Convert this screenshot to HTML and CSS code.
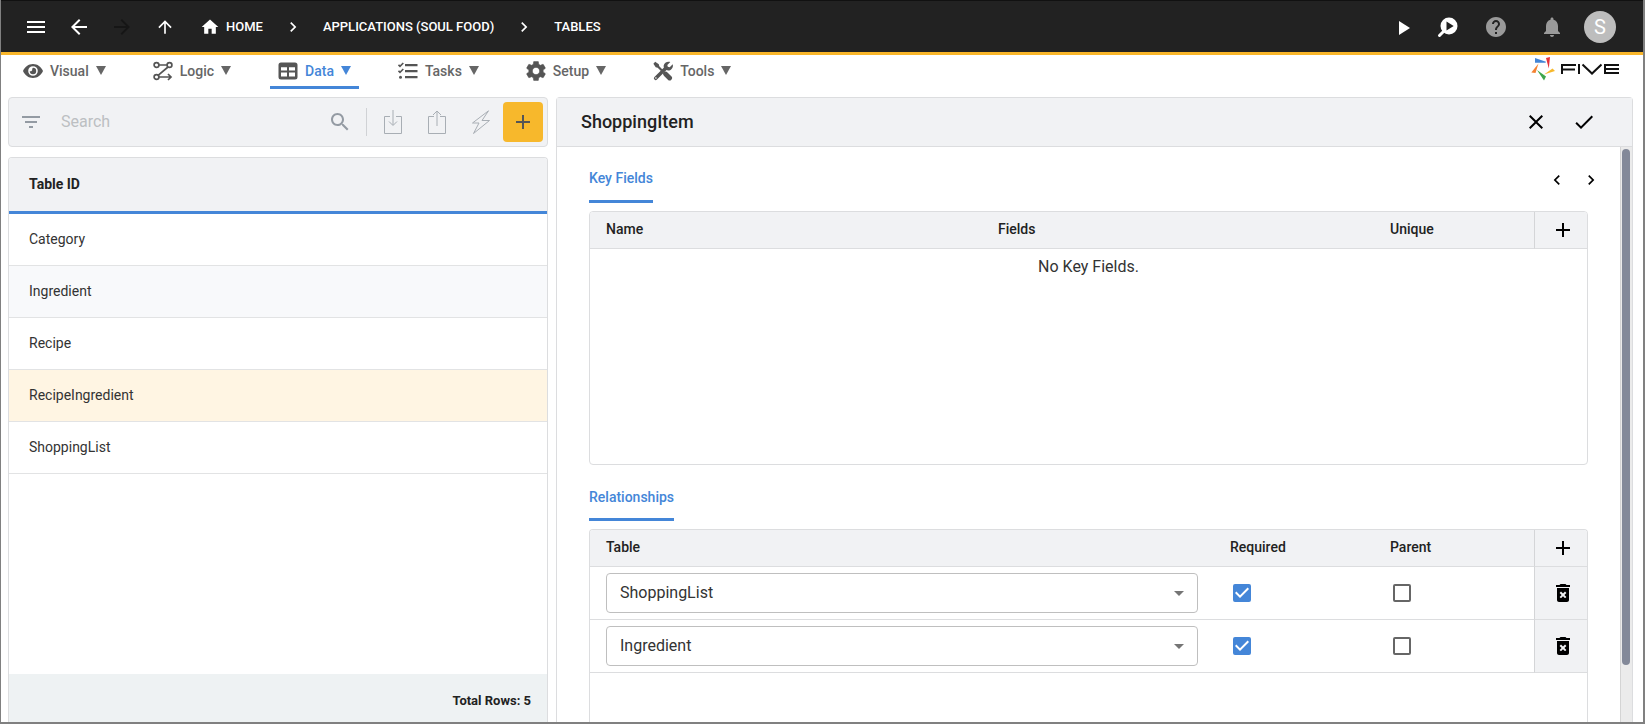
FILE: index.html
```html
<!DOCTYPE html>
<html lang="en">
<head>
<meta charset="utf-8">
<title>Five - Tables</title>
<link rel="stylesheet" href="styles.css">
</head>
<body>
<div class="app">
  <header class="topbar">
    <div class="topbar-nav">
      <button class="icon-btn" aria-label="Menu"><svg class="ico" viewBox="0 0 24 24"><path d="M3 18h18v-2H3v2zm0-5h18v-2H3v2zm0-7v2h18V6H3z"/></svg></button>
      <button class="icon-btn" aria-label="Back"><svg class="ico" viewBox="0 0 24 24"><path d="M20 11H7.830l5.590-5.590L12 4l-8 8 8 8 1.410-1.410L7.830 13H20v-2z"/></svg></button>
      <button class="icon-btn dim" aria-label="Forward" disabled><svg class="ico" viewBox="0 0 24 24"><path d="M12 4l-1.410 1.410L16.170 11H4v2h12.170l-5.580 5.590L12 20l8-8z"/></svg></button>
      <button class="icon-btn" aria-label="Up"><svg class="ico small" viewBox="0 0 24 24"><path d="M4 12l1.410 1.410L11 7.830V20h2V7.830l5.580 5.590L20 12l-8-8-8 8z"/></svg></button>
    </div>
    <nav class="crumbs">
      <a href="#" class="crumb"><svg class="home" viewBox="0 0 24 24"><path d="M10 20v-6h4v6h5v-8h3L12 3 2 12h3v8z"/></svg>HOME</a>
      <svg class="chev" viewBox="0 0 24 24"><path d="M8.600 16.600L13.200 12 8.600 7.400 10 6l6 6-6 6z"/></svg>
      <a href="#" class="crumb">APPLICATIONS (SOUL FOOD)</a>
      <svg class="chev" viewBox="0 0 24 24"><path d="M8.600 16.600L13.200 12 8.600 7.400 10 6l6 6-6 6z"/></svg>
      <a href="#" class="crumb">TABLES</a>
    </nav>
    <div class="topbar-tools">
      <button class="icon-btn" aria-label="Run"><svg class="ico" viewBox="0 0 24 24"><path d="M7 6v14l11-7z"/></svg></button>
      <button class="icon-btn" aria-label="Inspect"><svg class="ico" viewBox="0 0 24 24"><circle cx="13" cy="11" r="8.500"/><path d="M8 16l-4.500 4.500" stroke="#fff" stroke-width="3" stroke-linecap="round"/><path fill="#222" d="M10.500 6.500v9l7.200-4.500z"/></svg></button>
      <button class="icon-btn grey help" aria-label="Help"><svg class="ico" viewBox="0 0 24 24"><path d="M12 2C6.480 2 2 6.480 2 12s4.480 10 10 10 10-4.480 10-10S17.520 2 12 2zm1 17h-2v-2h2v2zm2.070-7.750l-.9.920C13.450 12.900 13 13.500 13 15h-2v-.5c0-1.100.45-2.100 1.170-2.830l1.240-1.260c.37-.36.590-.86.590-1.410 0-1.100-.9-2-2-2s-2 .9-2 2H8c0-2.210 1.790-4 4-4s4 1.790 4 4c0 .88-.36 1.680-.93 2.250z"/></svg></button>
      <button class="icon-btn grey bell" aria-label="Notifications"><svg class="ico" viewBox="0 0 24 24"><path d="M12 22c1.100 0 2-.9 2-2h-4c0 1.100.9 2 2 2zm6-6v-5c0-3.070-1.630-5.640-4.500-6.320V4c0-.83-.67-1.500-1.500-1.500s-1.500.67-1.500 1.500v.68C7.640 5.360 6 7.920 6 11v5l-2 2v1h16v-1l-2-2z"/></svg></button>
      <button class="avatar">S</button>
    </div>
  </header>

  <div class="menubar">
    <nav class="menu">
      <button class="menu-item"><svg class="mi" viewBox="0 0 20 20"><path fill-rule="evenodd" d="M10 3C5.500 3 1.800 5.800 0 10c1.800 4.200 5.500 7 10 7s8.200-2.800 10-7c-1.800-4.200-5.500-7-10-7zm0 2.200a4.800 4.800 0 1 1 0 9.600 4.800 4.800 0 0 1 0-9.600z"/><path d="M10 6.800A3.200 3.200 0 1 1 6.800 10c.8.600 2.400.2 2.400-1.200 0-.8 0-1.500.8-2z"/></svg>Visual<i class="tri"></i></button>
      <button class="menu-item"><svg class="mi" viewBox="0 0 20 20"><g fill="none" stroke="#555" stroke-width="1.700"><circle cx="3.500" cy="4" r="2.400"/><circle cx="16.500" cy="4" r="2.400"/><circle cx="3.500" cy="16" r="2.400"/><path d="M6 4h8M15 6L5.400 14.200M6 16h11.500M15 13l3 3-3 3"/></g></svg>Logic<i class="tri"></i></button>
      <button class="menu-item active"><svg class="mi" viewBox="0 0 20 20"><path fill-rule="evenodd" d="M3 1.500h14a2.500 2.500 0 0 1 2.500 2.500v12a2.500 2.500 0 0 1-2.500 2.500H3A2.500 2.500 0 0 1 .5 16V4A2.500 2.500 0 0 1 3 1.500zM3 6.300v3.200h6V6.300zm8 0v3.200h6V6.300zm-8 5.200v4h6v-4zm8 0v4h6v-4z"/></svg>Data<i class="tri"></i></button>
      <button class="menu-item"><svg class="mi" viewBox="0 0 20 20"><path d="M7 3h12.500v2.200H7zM7 9h12.500v2.200H7zM7 15h12.500v2.200H7z"/><circle cx="2.500" cy="16.200" r="1.500"/><path fill="none" stroke="#555" stroke-width="1.600" d="M.5 3.800l1.500 1.600L5.300 2M.5 9.800L2 11.400 5.300 8"/></svg>Tasks<i class="tri"></i></button>
      <button class="menu-item"><svg class="mi" viewBox="2 2 20 20"><path d="M19.140 12.940c.04-.3.060-.61.060-.94 0-.32-.02-.64-.07-.94l2.030-1.580c.18-.14.230-.41.120-.61l-1.920-3.320c-.12-.22-.37-.29-.59-.22l-2.390.96c-.5-.38-1.030-.7-1.620-.94l-.36-2.540c-.04-.24-.24-.41-.48-.41h-3.840c-.24 0-.43.17-.47.410l-.36 2.540c-.59.24-1.130.57-1.620.94l-2.390-.96c-.22-.08-.47 0-.59.220L2.740 8.870c-.12.210-.08.470.12.610l2.030 1.580c-.05.300-.09.630-.09.940s.02.640.07.940l-2.030 1.580c-.18.140-.23.410-.12.610l1.920 3.320c.12.220.37.290.59.220l2.390-.96c.5.380 1.030.7 1.620.94l.36 2.540c.05.240.24.410.48.410h3.840c.24 0 .44-.17.470-.41l.36-2.540c.59-.24 1.130-.56 1.620-.94l2.390.96c.22.080.47 0 .59-.22l1.920-3.320c.12-.22.070-.47-.12-.61l-2.010-1.580zM12 15.600c-1.980 0-3.600-1.620-3.600-3.600s1.620-3.600 3.600-3.600 3.600 1.620 3.600 3.600-1.620 3.600-3.600 3.600z" stroke="#555" stroke-width=".5"/></svg>Setup<i class="tri"></i></button>
      <button class="menu-item"><svg class="mi" viewBox="0 0 20 20"><path d="M2.200.8l3.600 2.400.5 2 3.400 3.500-1.500 1.500-3.500-3.500-2-.5L.4 2.700z"/><path d="M10.500 11.500c1.500-1.500 3-1.200 4 0l3.800 3.700a2.400 2.400 0 0 1-3.400 3.500l-3.800-3.800c-1.200-1.100-1.500-2.300-.6-3.400z"/><path fill="none" stroke="#555" stroke-width="3.600" stroke-linecap="round" d="M2.700 17.300L12.500 7.500"/><path d="M17.300.9l-3 3 .5 1.900 1.900.5 3-3c.9 3-1.200 6.200-4.500 6.200-3 0-5-2.400-4.500-5C11.200 1.700 14.200 0 17.300.9z"/><circle cx="2.900" cy="17" r=".8" fill="#fff"/></svg>Tools<i class="tri"></i></button>
    </nav>
    <svg class="logo" viewBox="0 0 88 24" role="img" aria-label="Five"><path fill="#4385d6" d="M4 1l11 3.800-.5 1L4 5.800z"/><path fill="#e5333b" d="M15 1l4-1-1.200 11.500z"/><path fill="#f7b82c" d="M13 17.500l8.500-6L24 14z"/><path fill="#3da64b" d="M6 13l9 6.500-2 4z"/><path fill="#f58232" d="M7.500 6.500L4.500 16 .3 15.500z"/><g fill="none" stroke="#111" stroke-width="2"><path d="M31 17V8h14M31 12.500h13M48 7v10M51.500 7.500l9.500 9 9.500-9M88 8H74v8h14M74 12h14"/></g></svg>
  </div>

  <main class="work">
    <section class="list-pane">
      <div class="toolbar">
        <button class="tool" aria-label="Filter"><svg class="ico" viewBox="0 0 24 24"><path d="M10 18h4v-2h-4v2zM3 6v2h18V6H3zm3 7h12v-2H6v2z"/></svg></button>
        <input class="search" type="search" placeholder="Search" aria-label="Search">
        <button class="tool" aria-label="Run search"><svg class="ico" viewBox="0 0 24 24"><path d="M15.500 14h-.79l-.28-.27C15.410 12.590 16 11.110 16 9.500 16 5.910 13.090 3 9.500 3S3 5.910 3 9.500 5.910 16 9.500 16c1.610 0 3.090-.59 4.230-1.570l.27.280v.79l5 4.990L20.490 19l-4.990-5zm-6 0C7.010 14 5 11.990 5 9.500S7.010 5 9.500 5 14 7.010 14 9.500 11.990 14 9.500 14z"/></svg></button>
        <span class="sep"></span>
        <div class="tool-group">
          <button class="tool" aria-label="Import"><svg class="ico line" viewBox="0 0 24 24"><path d="M9 6.500H3.500v17h17v-17H15M12 0v15M8 11.500l4 4 4-4"/></svg></button>
          <button class="tool" aria-label="Export"><svg class="ico line" viewBox="0 0 24 24"><path d="M9 6.500H3.500v17h17v-17H15M12 16V1M8 5l4-4 4 4"/></svg></button>
          <button class="tool" aria-label="Quick action"><svg class="ico line" viewBox="0 0 24 24"><path d="M19.500.8L3.500 13h6.500L4.500 23.500 20.500 10.500H13z"/></svg></button>
        </div>
        <button class="add" aria-label="Add"><svg class="ico" viewBox="0 0 24 24"><path d="M19 13h-6v6h-2v-6H5v-2h6V5h2v6h6z"/></svg></button>
      </div>
      <div class="grid-box">
        <table class="grid">
          <thead><tr><th>Table ID</th></tr></thead>
          <tbody>
            <tr><td>Category</td></tr>
            <tr class="alt"><td>Ingredient</td></tr>
            <tr><td>Recipe</td></tr>
            <tr class="selected"><td>RecipeIngredient</td></tr>
            <tr><td>ShoppingList</td></tr>
          </tbody>
        </table>
        <div class="total">Total Rows: 5</div>
      </div>
    </section>

    <section class="detail">
      <div class="detail-head">
        <h1>ShoppingItem</h1>
        <button class="tool" aria-label="Cancel"><svg class="ico" viewBox="0 0 24 24"><path d="M19 6.410L17.590 5 12 10.590 6.410 5 5 6.410 10.590 12 5 17.590 6.410 19 12 13.410 17.590 19 19 17.590 13.410 12z"/></svg></button>
        <button class="tool" aria-label="Save"><svg class="ico" viewBox="0 0 24 24"><path d="M9 16.170L4.830 12l-1.420 1.410L9 19 21 7l-1.410-1.410z"/></svg></button>
      </div>
      <div class="detail-body">
        <div class="form">
          <div class="section-head">
            <h2>Key Fields</h2>
            <div class="pager">
              <button class="page" aria-label="Previous"><svg class="chev" viewBox="0 0 24 24"><path d="M15.400 7.400L14 6l-6 6 6 6 1.400-1.400L10.800 12z"/></svg></button>
              <button class="page" aria-label="Next"><svg class="chev" viewBox="0 0 24 24"><path d="M8.600 16.600L13.200 12 8.600 7.400 10 6l6 6-6 6z"/></svg></button>
            </div>
          </div>
          <div class="box keys">
            <table class="sub">
              <colgroup><col><col><col class="c-check"><col class="c-act"></colgroup>
              <thead><tr><th>Name</th><th>Fields</th><th>Unique</th><th class="act"><button class="tool" aria-label="Add key field"><svg class="ico" viewBox="0 0 24 24"><path d="M19 13h-6v6h-2v-6H5v-2h6V5h2v6h6z"/></svg></button></th></tr></thead>
            </table>
            <p class="empty">No Key Fields.</p>
          </div>
          <div class="section-head second"><h2>Relationships</h2></div>
          <div class="box rels">
            <table class="sub">
              <colgroup><col><col class="c-check"><col class="c-check"><col class="c-act"></colgroup>
              <thead><tr><th>Table</th><th>Required</th><th>Parent</th><th class="act"><button class="tool" aria-label="Add relationship"><svg class="ico" viewBox="0 0 24 24"><path d="M19 13h-6v6h-2v-6H5v-2h6V5h2v6h6z"/></svg></button></th></tr></thead>
              <tbody>
                <tr>
                  <td><div class="pick"><select aria-label="Table"><option>ShoppingList</option></select><svg class="caret" viewBox="0 0 10 5"><path d="M0 0l5 5 5-5z"/></svg></div></td>
                  <td><label class="check"><input type="checkbox" aria-label="Required" checked><svg class="tick" viewBox="3 3 18 18"><path d="M10 17l-5-5 1.410-1.410L10 14.170l7.590-7.590L19 8z"/></svg></label></td>
                  <td><label class="check"><input type="checkbox" aria-label="Parent"></label></td>
                  <td class="act"><button class="tool" aria-label="Delete"><svg class="ico" viewBox="0 0 24 24"><path fill-rule="evenodd" d="M6 19c0 1.100.9 2 2 2h8c1.100 0 2-.9 2-2V7H6v12zm2.600-7.100l1.400-1.400 2 2 2-2 1.400 1.400-2 2 2 2-1.400 1.400-2-2-2 2-1.400-1.400 2-2zM15.500 4l-1-1h-5l-1 1H5v2h14V4z"/></svg></button></td>
                </tr>
                <tr>
                  <td><div class="pick"><select aria-label="Table"><option>Ingredient</option></select><svg class="caret" viewBox="0 0 10 5"><path d="M0 0l5 5 5-5z"/></svg></div></td>
                  <td><label class="check"><input type="checkbox" aria-label="Required" checked><svg class="tick" viewBox="3 3 18 18"><path d="M10 17l-5-5 1.410-1.410L10 14.170l7.590-7.590L19 8z"/></svg></label></td>
                  <td><label class="check"><input type="checkbox" aria-label="Parent"></label></td>
                  <td class="act"><button class="tool" aria-label="Delete"><svg class="ico" viewBox="0 0 24 24"><path fill-rule="evenodd" d="M6 19c0 1.100.9 2 2 2h8c1.100 0 2-.9 2-2V7H6v12zm2.600-7.100l1.400-1.400 2 2 2-2 1.400 1.400-2 2 2 2-1.400 1.400-2-2-2 2-1.400-1.400 2-2zM15.500 4l-1-1h-5l-1 1H5v2h14V4z"/></svg></button></td>
                </tr>
              </tbody>
            </table>
          </div>
        </div>
        <div class="scroll"><div class="thumb"></div></div>
      </div>
    </section>
  </main>
</div>
</body>
</html>
```

FILE: styles.css
```css
* { box-sizing: border-box; }
body { margin: 0; font-family: Roboto, "Liberation Sans", sans-serif; color: #222; background: #fff; }
button { font: inherit; color: inherit; background: none; border: 0; padding: 0; display: flex; align-items: center; justify-content: center; }
h1, h2, p { margin: 0; }
svg { display: block; fill: currentColor; flex: none; }

.app { height: 100vh; display: flex; flex-direction: column; overflow: hidden; border: solid #808080; border-width: 0 2px 2px 1px; }

.topbar { flex: none; height: 55px; display: flex; align-items: center; background: #222; color: #fff; border-top: 1px solid #111; border-bottom: 3px solid #f9b62a; margin: 0 -2px 0 -1px; padding: 1px 29px 0 24px; }
.ico { width: 24px; height: 24px; }
.ico.small { width: 20px; height: 20px; }
.icon-btn { width: 24px; height: 24px; }
.icon-btn.dim { color: #161616; }
.icon-btn.grey { color: #9a9a9a; }
.topbar-nav { display: flex; gap: 19px; }
.crumbs { display: flex; align-items: center; margin-left: 23px; gap: 20px; flex: 1; }
.crumb { display: flex; align-items: center; gap: 6px; color: #fff; text-decoration: none; font-size: 13px; font-weight: 500; line-height: 20px; }
.home { width: 20px; height: 20px; }
.chev { width: 20px; height: 20px; }
.topbar-tools { display: flex; align-items: center; gap: 20px; }
.help { margin-left: 4px; }
.bell { margin-left: 12px; }
.avatar { width: 32px; height: 32px; border-radius: 50%; background: #bdbdbd; color: #fff; font-size: 20px; }

.menubar { flex: none; height: 42px; display: flex; justify-content: space-between; padding: 0 24px 0 14px; }
.menu { display: flex; gap: 31px; }
.menu-item { height: 34px; padding: 0 8px; border-bottom: 3px solid transparent; font-size: 14px; font-weight: 500; color: #666; gap: 7px; }
.menu-item.active { color: #4486d8; border-bottom-color: #4486d8; border-radius: 2px 2px 0 0; }
.mi { width: 20px; height: 20px; color: #555; }
.tri { border: 5px solid transparent; border-top: 9px solid currentColor; border-bottom: 0; }
.logo { width: 88px; height: 24px; margin-top: 2px; }

.work { flex: 1; min-height: 0; display: flex; gap: 8px; padding: 0 10px 0 7px; }
.list-pane { flex: 0 0 540px; display: flex; flex-direction: column; gap: 10px; }
.toolbar { height: 50px; display: flex; align-items: center; background: #f1f2f4; border: 1px solid #dcdddf; border-radius: 4px; padding: 0 4px 0 10px; color: #949ba3; }
.tool { width: 24px; height: 24px; }
.search { flex: 1; min-width: 0; margin: 0 8px 0 16px; border: 0; outline: 0; background: none; font: 16px/24px Roboto, sans-serif; color: #222; }
.search::placeholder { color: #bcbfc2; }
.sep { width: 1px; height: 28px; background: #d0d2d5; margin: 0 14px; }
.tool-group { display: flex; gap: 20px; margin-right: 10px; }
.line { fill: none; stroke: #a8aeb4; stroke-width: 1; }
.add { width: 40px; height: 40px; border-radius: 4px; background: #f7b82c; color: #555; }

.grid-box { flex: 1; min-height: 0; display: flex; flex-direction: column; border: 1px solid #dcdddf; border-bottom: 0; border-radius: 4px 4px 0 0; overflow: hidden; }
.grid { width: 100%; border-collapse: separate; border-spacing: 0; font-size: 14px; text-align: left; }
.grid th { height: 56px; padding: 0 20px 2px; background: #f1f2f4; border-bottom: 3px solid #4486d8; font-weight: 700; }
.grid td { height: 52px; padding: 0 20px 2px; border-bottom: 1px solid #e2e3e4; color: #333; }
.grid .alt td { background: #f8f9fb; }
.grid .selected td { background: #fff5e3; }
.total { margin-top: auto; height: 48px; display: flex; align-items: center; justify-content: flex-end; padding: 4px 16px 0; background: #eef2f3; font-size: 13px; font-weight: 700; }

.detail { flex: 1; min-width: 0; display: flex; flex-direction: column; border: 1px solid #dcdddf; border-bottom: 0; border-radius: 4px 4px 0 0; }
.detail-head { flex: none; height: 49px; display: flex; align-items: center; gap: 24px; padding: 0 36px 0 24px; background: #f1f2f4; border-bottom: 1px solid #dcdddf; color: #000; }
.detail-head h1 { flex: 1; padding-bottom: 2px; font-size: 18px; font-weight: 500; color: #222; }
.detail-body { flex: 1; min-height: 0; display: flex; }
.form { flex: 1; min-width: 0; display: flex; flex-direction: column; padding: 16px 32px 0; overflow: hidden; }
.scroll { flex: none; width: 12px; background: #ebebeb; border-left: 1px solid #d4d4d4; padding: 2px 2px 0 1px; }
.thumb { width: 8px; height: 90%; border-radius: 4px; background: #838999; }
.section-head { flex: none; display: flex; justify-content: space-between; align-items: flex-start; height: 48px; color: #000; }
.section-head h2 { height: 40px; border-bottom: 3px solid #4486d8; border-radius: 2px 2px 0 0; color: #4486d8; font-size: 14px; line-height: 31px; font-weight: 500; }
.section-head.second { margin-top: 16px; }
.second h2 { padding-top: 1px; }
.pager { display: flex; gap: 14px; padding: 7px 0; margin-right: -13px; }
.page { width: 20px; height: 20px; }

.box { border: 1px solid #dcdddf; border-radius: 4px; overflow: hidden; flex: none; }
.keys { height: 254px; }
.rels { flex: 1; min-height: 0; border-bottom: 0; border-radius: 4px 4px 0 0; }
.sub { width: 100%; table-layout: fixed; border-collapse: separate; border-spacing: 0; text-align: left; color: #000; }
.c-check { width: 160px; }
.c-act { width: 53px; }
.sub th { height: 37px; padding: 0 16px 2px; background: #f1f2f4; border-bottom: 1px solid #dcdddf; font-size: 14px; font-weight: 500; color: #222; }
.sub td { height: 53px; padding: 0 16px; border-bottom: 1px solid #dcdddf; }
.sub .act { padding: 0 12px 0 16px; border-left: 1px solid #d4d5d7; background: #f1f2f4; color: #000; }
.empty { text-align: center; font-size: 16px; line-height: 24px; padding: 6px 0; color: #333; }
.pick { position: relative; }
.pick select { appearance: none; width: 100%; height: 40px; padding: 0 13px; border: 1px solid #bfbfbf; border-radius: 4px; background: #fff; font: 16px/24px Roboto, sans-serif; color: #333; display: block; }
.caret { position: absolute; right: 14px; top: 18px; width: 10px; height: 5px; color: #757575; pointer-events: none; }
.check { position: relative; display: block; width: 18px; height: 18px; margin-left: 3px; }
.check input { appearance: none; display: block; width: 18px; height: 18px; margin: 0; border: 2px solid #666; border-radius: 2px; }
.check input:checked { background: #4486d8; border-color: #4486d8; }
.tick { position: absolute; inset: 0; width: 18px; height: 18px; color: #fff; pointer-events: none; }
```
